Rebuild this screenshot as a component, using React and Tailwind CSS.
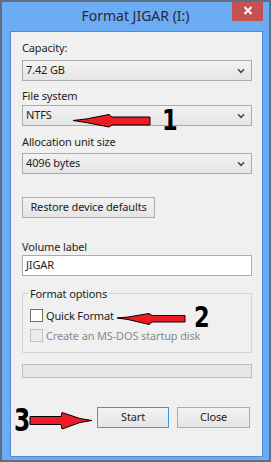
import React from 'react';

// Windows 8 "Format" dialog with red annotation arrows

function Chevron() {
  return (
    <svg width="8" height="6" viewBox="0 0 8 6" className="text-[#4a4a4a]">
      <path d="M1 1.2 L4 4.3 L7 1.2" fill="none" stroke="currentColor" strokeWidth="1.6" />
    </svg>
  );
}

function Combo({ value, className = '' }) {
  return (
    <div
      className={`flex h-[21px] items-center justify-between border border-[#acacac] bg-gradient-to-b from-[#f2f2f2] to-[#e5e5e5] pl-[3px] pr-[6px] ${className}`}
    >
      <span>{value}</span>
      <Chevron />
    </div>
  );
}

function Label({ children, className = '' }) {
  return <div className={`leading-[15px] ${className}`}>{children}</div>;
}

function Check({ label, disabled }) {
  return (
    <div className="flex items-center gap-[3px] leading-[15px]">
      <div
        className={`h-[13px] w-[13px] border ${
          disabled ? 'border-[#c3c3c3] bg-[#ececec]' : 'border-[#707070] bg-white'
        }`}
      />
      <span className={disabled ? 'text-[#8a8a8a]' : ''}>{label}</span>
    </div>
  );
}

function Button({ children, className = '' }) {
  return (
    <div
      className={`flex h-[21px] items-center justify-center border bg-gradient-to-b from-[#f2f2f2] to-[#e5e5e5] ${className}`}
    >
      {children}
    </div>
  );
}

function Annotations() {
  return (
    <>
      <svg
        className="pointer-events-none absolute left-0 top-0"
        width="271"
        height="462"
        viewBox="0 0 271 462"
      >
        {/* arrow 1 */}
        <polygon
          points="71,118.5 84,117 107,112.5 110,115 148,115 148,123 110,123 107,125 84,120.5"
          fill="#ed1c24"
          stroke="#000"
          strokeWidth="1"
        />
        {/* arrow 2 */}
        <polygon
          points="115,316 126,315 147,311.5 150,313.5 183,313.5 183,320 150,320 147,322.5 126,317.5"
          fill="#ed1c24"
          stroke="#000"
          strokeWidth="1"
        />
        {/* arrow 3 */}
        <polygon
          points="28,414.5 59,414.5 60,410.5 78,416.5 90,418.5 78,420.5 60,427 59,422.5 28,422.5"
          fill="#ed1c24"
          stroke="#000"
          strokeWidth="1"
        />
      </svg>
      <span className="pointer-events-none absolute left-[160px] top-[103px] origin-top scale-y-[1.15] font-['DejaVu_Sans_Condensed',sans-serif] text-[25px] font-bold leading-[28px] text-black">
        1
      </span>
      <span className="pointer-events-none absolute left-[192px] top-[300px] origin-top scale-y-[1.15] font-['DejaVu_Sans_Condensed',sans-serif] text-[25px] font-bold leading-[28px] text-black">
        2
      </span>
      <span className="pointer-events-none absolute left-[12px] top-[401px] origin-top scale-y-[1.2] font-['DejaVu_Sans_Condensed',sans-serif] text-[26px] font-bold leading-[28px] text-black">
        3
      </span>
    </>
  );
}

export default function App() {
  return (
    <div className="relative h-[462px] w-[271px] overflow-hidden border-2 border-[#5f6e80] bg-[#6cacf5] font-['Noto_Sans',sans-serif] text-[11px] tracking-[-0.15px] text-[#1e1e1e]">
      {/* title bar */}
      <div className="flex h-[29px] items-center justify-center pb-[3px] text-[14px] tracking-normal text-[#2a2a2a]">
        Format JIGAR (I:)
      </div>
      <div className="absolute right-[6px] top-[-2px] flex h-[21px] w-[31px] items-center justify-center bg-[#c75050]">
        <svg width="10" height="9" viewBox="0 0 10 9">
          <path d="M1.5 1 L8.5 8 M8.5 1 L1.5 8" stroke="#fff" strokeWidth="2" />
        </svg>
      </div>

      {/* client area */}
      <div className="ml-[8px] mr-[6px] flex h-[426px] flex-col border border-[#4e8cd6] bg-[#f0f0f0] pl-[11px] pr-[10px]">
        <Label className="mt-[8px]">Capacity:</Label>
        <Combo value="7.42 GB" className="mt-[5px]" />

        <Label className="mt-[7px]">File system</Label>
        <Combo value="NTFS" className="mt-[2px]" />

        <Label className="mt-[8px]">Allocation unit size</Label>
        <Combo value="4096 bytes" className="mt-[4px]" />

        <Button className="mt-[23px] h-[20px] w-[133px] border-[#acacac]">Restore device defaults</Button>

        <Label className="mt-[21px]">Volume label</Label>
        <div className="mt-[1px] flex h-[21px] items-center border border-[#abadb3] bg-white pl-[3px]">
          JIGAR
        </div>

        <fieldset className="mt-[10px] h-[67px] border border-[#d5d5d5] pl-[7px]">
          <legend className="ml-[-2px] px-[2px] leading-[15px]">Format options</legend>
          <div className="mt-[7px] flex flex-col gap-[5px]">
            <Check label="Quick Format" />
            <Check label="Create an MS-DOS startup disk" disabled />
          </div>
        </fieldset>

        <div className="mt-[11px] h-[14px] border border-[#bcbcbc] bg-[#e6e6e6]" />

        <div className="mt-[29px] flex justify-end gap-[8px] pr-[2px]">
          <Button className="w-[72px] border-[#3c97e6]">Start</Button>
          <Button className="w-[73px] border-[#acacac]">Close</Button>
        </div>
      </div>

      <Annotations />
    </div>
  );
}
